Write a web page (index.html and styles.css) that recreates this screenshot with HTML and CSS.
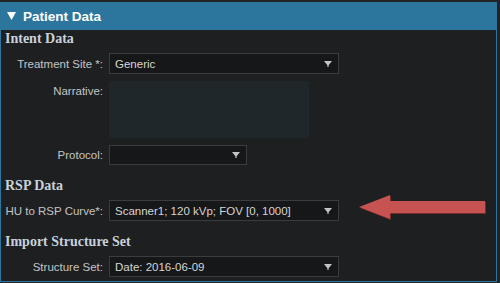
FILE: index.html
```html
<!DOCTYPE html>
<html lang="en">
<head>
    <meta charset="UTF-8">
    <title>Patient Data</title>
    <link rel="stylesheet" href="styles.css">
</head>
<body>

    <div class="panel">
        <div class="panel-header">
            <svg class="toggle" width="9" height="8" viewBox="0 0 9 8"><polygon points="0,0 9,0 4.5,8" fill="#ffffff"/></svg>
            <span>Patient Data</span>
        </div>

        <div class="panel-body">
            <h3 class="section-title">Intent Data</h3>

            <div class="row">
                <label>Treatment Site *:</label>
                <div class="select wide">
                    <span>Generic</span>
                    <svg class="caret" width="8" height="6" viewBox="0 0 8 6"><path d="M0 0H8L4.6 4.2V6H3.4V4.2Z" fill="#c4c4c4"/></svg>
                </div>
            </div>

            <div class="row">
                <label class="top">Narrative:</label>
                <div class="textarea"></div>
            </div>

            <div class="row">
                <label>Protocol:</label>
                <div class="select short">
                    <span></span>
                    <svg class="caret" width="8" height="6" viewBox="0 0 8 6"><path d="M0 0H8L4.6 4.2V6H3.4V4.2Z" fill="#c4c4c4"/></svg>
                </div>
            </div>

            <h3 class="section-title">RSP Data</h3>

            <div class="row">
                <label>HU to RSP Curve*:</label>
                <div class="select wide">
                    <span>Scanner1; 120 kVp; FOV [0, 1000]</span>
                    <svg class="caret" width="8" height="6" viewBox="0 0 8 6"><path d="M0 0H8L4.6 4.2V6H3.4V4.2Z" fill="#c4c4c4"/></svg>
                </div>
            </div>

            <h3 class="section-title">Import Structure Set</h3>

            <div class="row">
                <label>Structure Set:</label>
                <div class="select wide">
                    <span>Date: 2016-06-09</span>
                    <svg class="caret" width="8" height="6" viewBox="0 0 8 6"><path d="M0 0H8L4.6 4.2V6H3.4V4.2Z" fill="#c4c4c4"/></svg>
                </div>
            </div>

            <!-- annotation arrow pointing at the curve dropdown -->
            <svg class="pointer" width="134" height="28" viewBox="0 0 134 28">
                <polygon points="2,13 33,1 33,7 128,7 128,19 33,19 33,25" fill="#7a2a28" transform="translate(1,1)"/>
                <polygon points="2,13 33,1 33,7 128,7 128,19 33,19 33,25" fill="#c65252"/>
            </svg>
        </div>
    </div>

</body>
</html>
```

FILE: styles.css
```css
body {
    margin: 0;
    background-color: #232323;
    font-family: 'Liberation Sans', Arial, sans-serif;
}
.panel {
    width: 497px;
    margin-top: 2px;
}
.panel-header {
    display: flex;
    align-items: center;
    height: 28px;
    background-color: #2c769e;
    color: #ffffff;
    font-weight: bold;
    font-size: 13.5px;
    padding-left: 7px;
}
.toggle {
    display: block;
    margin-right: 7px;
}
.panel-body {
    position: relative;
    display: flex;
    flex-direction: column;
    background-color: #1e1f21;
    border: 1px solid #2c769e;
    border-top: none;
    padding: 1px 0 4px 0;
}
.section-title {
    margin: 0;
    padding-left: 4px;
    height: 16px;
    line-height: 16px;
    font-family: 'Liberation Serif', 'Times New Roman', serif;
    font-size: 14px;
    font-weight: bold;
    color: #c9d2db;
}
.row {
    display: flex;
    align-items: center;
    margin-top: 7px;
}
.section-title + .row {
    margin-top: 6px;
}
.row + .section-title {
    margin-top: 13px;
}
.row label {
    width: 102px;
    margin-right: 6px;
    text-align: right;
    font-size: 11.5px;
    color: #c4c4c4;
}
.row label.top {
    align-self: flex-start;
    padding-top: 4px;
}
.select {
    display: flex;
    align-items: center;
    justify-content: space-between;
    box-sizing: border-box;
    height: 21px;
    padding: 0 6px 0 5px;
    background-color: #161719;
    border: 1px solid #3b3c3e;
    color: #d6d6d6;
    font-size: 11.5px;
}
.select.wide {
    width: 230px;
}
.select.short {
    width: 138px;
    height: 20px;
}
.caret {
    display: block;
}
.textarea {
    width: 200px;
    height: 57px;
    background-color: #1f272b;
    border-radius: 2px;
}
.pointer {
    position: absolute;
    left: 356px;
    top: 164px;
}
```
